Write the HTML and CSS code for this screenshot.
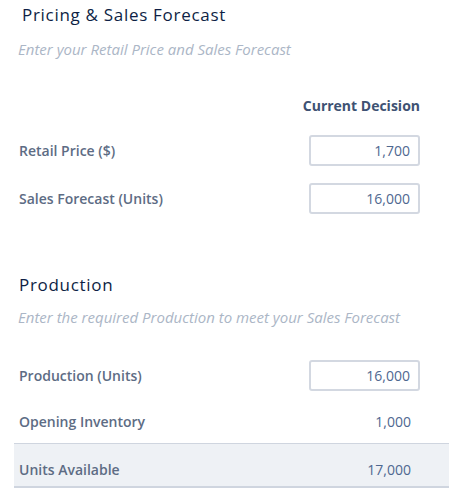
FILE: index.html
```html
<!DOCTYPE html>
<html>
<head>
<meta charset="utf-8">
<link rel="stylesheet" href="styles.css">
</head>
<body>
<div class="page">
  <section class="section first">
    <h2 class="title title-indent">Pricing &amp; Sales Forecast</h2>
    <p class="subtitle">Enter your Retail Price and Sales Forecast</p>
    <div class="col-head">Current Decision</div>
    <div class="row">
      <span class="label">Retail Price ($)</span>
      <div class="input">1,700</div>
    </div>
    <div class="row">
      <span class="label">Sales Forecast (Units)</span>
      <div class="input">16,000</div>
    </div>
  </section>
  <section class="section second">
    <h2 class="title">Production</h2>
    <p class="subtitle">Enter the required Production to meet your Sales Forecast</p>
    <div class="row prod">
      <span class="label">Production (Units)</span>
      <div class="input">16,000</div>
    </div>
    <div class="row plain">
      <span class="label">Opening Inventory</span>
      <span class="value">1,000</span>
    </div>
    <div class="row total">
      <span class="label">Units Available</span>
      <span class="value">17,000</span>
    </div>
  </section>
</div>
</body>
</html>
```
FILE: styles.css
```css
html, body {
  margin: 0;
  padding: 0;
  background: #ffffff;
}
body {
  font-family: "Open Sans", "Noto Sans", sans-serif;
}
.page {
  padding: 3px 0 0 14px;
}
.section { margin: 0; }
.second { margin-top: 51px; }
.title {
  margin: 0 0 0 5px;
  font-size: 17px;
  line-height: 24px;
  font-weight: 400;
  letter-spacing: 0.7px;
  color: #0e1f45;
}
.title-indent { margin-left: 8px; }
.subtitle {
  margin: 12px 0 0 4px;
  font-size: 15px;
  line-height: 20px;
  font-style: italic;
  color: #abb6c6;
}
.second .subtitle { margin-top: 10px; }
.col-head {
  margin-top: 37px;
  margin-bottom: 10px;
  padding-right: 29px;
  text-align: right;
  font-size: 14px;
  line-height: 20px;
  font-weight: 700;
  color: #3e5273;
}
.row {
  display: flex;
  align-items: center;
  justify-content: space-between;
  height: 48px;
  padding: 0 29px 0 5px;
}
.prod { margin-top: 24px; }
.plain { height: 44px; }
.label {
  font-size: 14px;
  font-weight: 600;
  color: #5d6c84;
}
.input {
  box-sizing: border-box;
  width: 111px;
  height: 31px;
  border: 2px solid #d3d8e1;
  border-radius: 3px;
  padding: 0 8px;
  text-align: right;
  font-size: 14px;
  line-height: 27px;
  color: #4f6890;
}
.value {
  padding-right: 9px;
  font-size: 14px;
  color: #4f6890;
}
.total {
  box-sizing: border-box;
  height: 45px;
  padding-top: 9px;
  background: #eef1f5;
  border-top: 1px solid #cfd5df;
  border-bottom: 2px solid #cfd5df;
}
```
